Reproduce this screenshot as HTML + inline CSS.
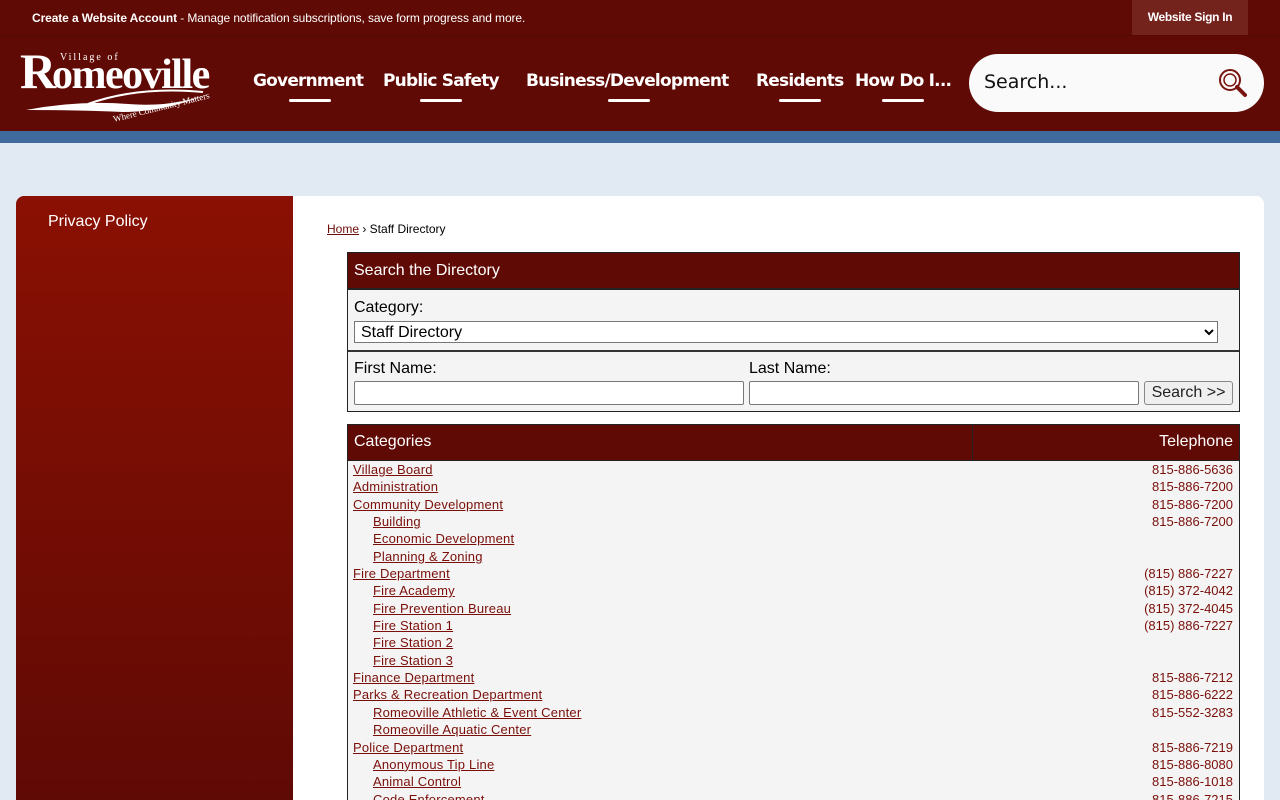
<!DOCTYPE html>
<html><head><meta charset="utf-8"><style>
*{box-sizing:border-box;margin:0;padding:0}
html,body{width:1280px;height:800px;overflow:hidden}
body{background:#e1e9f3;font-family:"Liberation Sans",Arial,sans-serif;position:relative}
.top{position:absolute;left:0;top:0;width:1280px;height:36px;background:#600a05;border-bottom:1px solid #550904}
.top .msg{position:absolute;left:32px;top:11px;color:#fff;font-size:12px;letter-spacing:-0.1px}
.top .msg b{font-weight:bold}
.top .sign{position:absolute;left:1132px;top:0;width:116px;height:35px;background:#74221c;color:#fff;font-size:12px;font-weight:bold;text-align:center;line-height:35px;letter-spacing:-0.3px}
.hdr{position:absolute;left:0;top:36px;width:1280px;height:95px;background:#600a05}
.blue{position:absolute;left:0;top:131px;width:1280px;height:12px;background:#3e6b9b}
.nav{position:absolute;top:71px;color:#fff;font-family:"DejaVu Sans",sans-serif;font-weight:bold;font-size:17px;letter-spacing:-0.8px}
.nav i{position:absolute;top:28px;height:3px;width:42px;background:#fff;border-radius:2px}
.search{position:absolute;left:969px;top:54px;width:295px;height:58px;background:#fafafa;border-radius:29px}
.search span{position:absolute;left:15px;top:17px;font-family:"DejaVu Sans",sans-serif;font-size:19px;color:#111}
.side{position:absolute;left:16px;top:196px;width:277px;height:604px;background:linear-gradient(#8a1003,#600a05);border-radius:8px 0 0 0}
.side span{position:absolute;left:32px;top:17px;color:#fff;font-size:16px}
.main{position:absolute;left:293px;top:196px;width:971px;height:604px;background:#fff;border-radius:0 8px 0 0}
.bc{position:absolute;left:327px;top:222px;font-size:12px;color:#000}
.bc a{color:#6b0d08}
.box{position:absolute;left:347px;width:893px;border:1px solid #222;background:#f4f4f4;overflow:hidden}
.bh{background:#600a05;color:#fff;font-size:16px;padding-left:6px}
a{color:#7a0f0a}
.rows{position:absolute;left:0;top:36px;width:891px;font-size:13px}
.r{position:relative;height:17.35px;line-height:17px}
.r a{position:absolute;left:5px;letter-spacing:0.2px}
.r.s a{left:25px}
.r .p{position:absolute;right:6px;color:#7a0f0a}
select{font-family:"Liberation Sans",Arial,sans-serif}
</style></head><body>
<div class="top"><div class="msg"><b>Create a Website Account</b> - Manage notification subscriptions, save form progress and more.</div><div class="sign">Website Sign In</div></div>
<div class="hdr"></div>
<svg style="position:absolute;left:18px;top:46px" width="215" height="80">
<text x="42" y="14" fill="#fff" font-family="Liberation Serif" font-size="10" letter-spacing="2">Village of</text>
<text x="2" y="42" fill="#fff" font-family="Liberation Serif" font-size="50" font-weight="bold" letter-spacing="-1">R</text>
<text x="34" y="42" fill="#fff" font-family="Liberation Serif" font-size="42" font-weight="bold" letter-spacing="-1.5">omeoville</text>
<path d="M8 64 Q60 54 110 58 Q160 62 200 44 Q150 66 105 66 Q60 64 8 64Z" fill="#fff"/>
<path d="M70 58 Q120 40 185 46" stroke="#fff" stroke-width="2" fill="none"/>
<text x="96" y="76" fill="#fff" font-family="Liberation Serif" font-size="9" transform="rotate(-14 96 76)">Where Community Matters</text>
</svg>
<div class="nav" style="left:253px">Government<i style="left:36px"></i></div>
<div class="nav" style="left:383px">Public Safety<i style="left:37px"></i></div>
<div class="nav" style="left:526px">Business/Development<i style="left:82px"></i></div>
<div class="nav" style="left:756px">Residents<i style="left:23px"></i></div>
<div class="nav" style="left:855px">How Do I...<i style="left:27px"></i></div>
<div class="search"><span>Search...</span>
<svg style="position:absolute;left:248px;top:14px" width="32" height="32" viewBox="0 0 32 32"><circle cx="13" cy="12" r="10" fill="none" stroke="#7a1410" stroke-width="2"/><circle cx="13" cy="12" r="6" fill="none" stroke="#7a1410" stroke-width="1.5"/><path d="M20 19 L28 27" stroke="#7a1410" stroke-width="4" stroke-linecap="round"/></svg></div>
<div class="blue"></div>
<div class="side"><span>Privacy Policy</span></div>
<div class="main"></div>
<div class="bc"><a href="#">Home</a> › Staff Directory</div>
<div class="box" style="top:252px;height:160px">
<div class="bh" style="height:37px;line-height:36px;border-bottom:2px solid #222">Search the Directory</div>
<div style="position:absolute;left:6px;top:46px;font-size:16px">Category:</div>
<select style="position:absolute;left:6px;top:68px;width:864px;height:22px;font-size:16px;border:1px solid #777;background:#fff;padding-left:2px"><option>Staff Directory</option></select>
<div style="position:absolute;left:0;top:97px;width:891px;border-top:2px solid #333"></div>
<div style="position:absolute;left:6px;top:107px;font-size:16px">First Name:</div>
<div style="position:absolute;left:401px;top:107px;font-size:16px">Last Name:</div>
<div style="position:absolute;left:6px;top:128px;width:390px;height:24px;border:1px solid #777;background:#fff;border-radius:2px"></div>
<div style="position:absolute;left:401px;top:128px;width:390px;height:24px;border:1px solid #777;background:#fff;border-radius:2px"></div>
<div style="position:absolute;left:796px;top:128px;width:89px;height:24px;border:1px solid #888;background:#efefef;border-radius:3px;font-size:16px;text-align:center;line-height:22px;color:#222">Search &gt;&gt;</div>
</div>
<div class="box" style="top:424px;height:376px;border-bottom:none">
<div class="bh" style="height:36px;line-height:34px;border-bottom:1px solid #222;position:relative">Categories<span style="position:absolute;left:624px;top:0;bottom:0;border-left:1px solid #222"></span><span style="position:absolute;right:6px">Telephone</span></div>
<div class="rows">
<div class="r"><a href="#">Village Board</a><span class="p">815-886-5636</span></div>
<div class="r"><a href="#">Administration</a><span class="p">815-886-7200</span></div>
<div class="r"><a href="#">Community Development</a><span class="p">815-886-7200</span></div>
<div class="r s"><a href="#">Building</a><span class="p">815-886-7200</span></div>
<div class="r s"><a href="#">Economic Development</a></div>
<div class="r s"><a href="#">Planning &amp; Zoning</a></div>
<div class="r"><a href="#">Fire Department</a><span class="p">(815) 886-7227</span></div>
<div class="r s"><a href="#">Fire Academy</a><span class="p">(815) 372-4042</span></div>
<div class="r s"><a href="#">Fire Prevention Bureau</a><span class="p">(815) 372-4045</span></div>
<div class="r s"><a href="#">Fire Station 1</a><span class="p">(815) 886-7227</span></div>
<div class="r s"><a href="#">Fire Station 2</a></div>
<div class="r s"><a href="#">Fire Station 3</a></div>
<div class="r"><a href="#">Finance Department</a><span class="p">815-886-7212</span></div>
<div class="r"><a href="#">Parks &amp; Recreation Department</a><span class="p">815-886-6222</span></div>
<div class="r s"><a href="#">Romeoville Athletic &amp; Event Center</a><span class="p">815-552-3283</span></div>
<div class="r s"><a href="#">Romeoville Aquatic Center</a></div>
<div class="r"><a href="#">Police Department</a><span class="p">815-886-7219</span></div>
<div class="r s"><a href="#">Anonymous Tip Line</a><span class="p">815-886-8080</span></div>
<div class="r s"><a href="#">Animal Control</a><span class="p">815-886-1018</span></div>
<div class="r s"><a href="#">Code Enforcement</a><span class="p">815-886-7215</span></div>
</div></div>
</body></html>
